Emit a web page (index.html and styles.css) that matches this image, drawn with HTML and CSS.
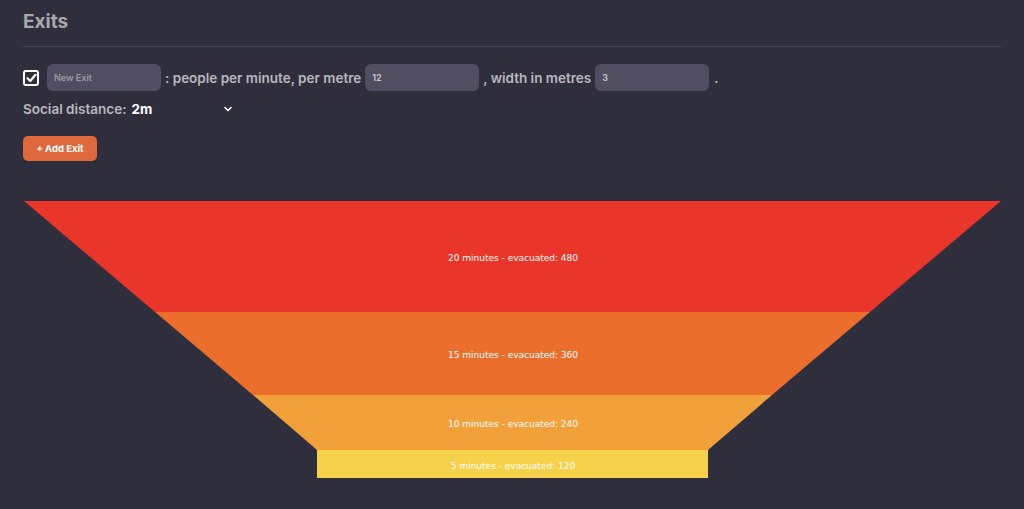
FILE: index.html
```html
<!DOCTYPE html>
<html>
<head>
<meta charset="utf-8">
<link rel="stylesheet" href="styles.css">
</head>
<body>
<div class="page">
  <h2 class="title">Exits</h2>
  <div class="rule"></div>
  <div class="exit-row">
    <span class="check">
      <svg width="11" height="10" viewBox="0 0 11 10"><path d="M1.5 5.2 L4.2 8 L9.5 1.8" fill="none" stroke="#fff" stroke-width="2.2" stroke-linecap="round" stroke-linejoin="round"/></svg>
    </span>
    <span class="field w-name">New Exit</span>
    <span class="lbl">: people per minute, per metre</span>
    <span class="field w-num">12</span>
    <span class="lbl">, width in metres</span>
    <span class="field w-num">3</span>
    <span class="lbl">.</span>
  </div>
  <div class="dist-row">
    <span class="lbl">Social distance:</span>
    <span class="select">
      <span class="sel-val">2m</span>
      <svg class="chev" width="8" height="6" viewBox="0 0 8 6"><path d="M1 1.5 L4 4.5 L7 1.5" fill="none" stroke="#fff" stroke-width="1.6" stroke-linecap="round" stroke-linejoin="round"/></svg>
    </span>
  </div>
  <button class="add">+ Add Exit</button>
  <svg class="funnel" width="978" height="278" viewBox="0 0 978 278">
    <polygon points="0,0 977,0 846,111 131,111" fill="#e9352a"/>
    <polygon points="131,111 846,111 748,194 229,194" fill="#ec6e2d"/>
    <polygon points="229,194 748,194 684,249 293,249" fill="#f2a03a"/>
    <rect x="293" y="249" width="391" height="28" fill="#f5d249"/>
    <g class="ftext" fill="#fff" text-anchor="middle">
      <text x="489" y="60">20 minutes - evacuated: 480</text>
      <text x="489" y="157">15 minutes - evacuated: 360</text>
      <text x="489" y="226">10 minutes - evacuated: 240</text>
      <text x="489" y="268">5 minutes - evacuated: 120</text>
    </g>
  </svg>
</div>
</body>
</html>
```
FILE: styles.css
```css
html, body { margin: 0; padding: 0; }
body {
  background: #2f2e3d;
  font-family: "Inter", "Noto Sans", sans-serif;
  width: 1024px;
  height: 509px;
  overflow: hidden;
}
.page { padding: 9px 23px 0 23px; }
.title {
  margin: 0;
  font-size: 19px;
  font-weight: 700;
  color: #a9a8ab;
  line-height: 26px;
}
.rule {
  height: 1px;
  background: #45444f;
  margin-top: 11px;
  width: 978px;
}
.exit-row {
  display: flex;
  align-items: center;
  margin-top: 17px;
  height: 27px;
}
.check {
  width: 12px;
  height: 12px;
  border: 2px solid #fff;
  border-radius: 3px;
  display: flex;
  align-items: center;
  justify-content: center;
  margin-right: 8px;
}
.field {
  height: 27px;
  background: #514e61;
  border-radius: 6px;
  font-size: 9px;
  font-weight: 600;
  color: #b3b1bc;
  display: flex;
  align-items: center;
  padding-left: 7px;
  box-sizing: border-box;
}
.w-name { width: 114px; color: #9c99a6; }
.w-num { width: 114px; color: #c8c6cf; }
.lbl {
  font-size: 13.5px;
  font-weight: 600;
  color: #b9b8be;
  margin: 0 4px 0 4px;
  white-space: nowrap;
}
.exit-row .lbl:last-child { margin-left: 5px; }
.dist-row {
  display: flex;
  align-items: center;
  margin-top: 6px;
  height: 24px;
}
.dist-row .lbl { margin-left: 0; }
.select {
  display: flex;
  align-items: center;
  width: 101px;
  justify-content: space-between;
  margin-left: 1px;
}
.sel-val {
  font-size: 13.5px;
  font-weight: 700;
  color: #fff;
}
.add {
  display: block;
  margin-top: 15px;
  width: 74px;
  height: 25px;
  border: none;
  border-radius: 5px;
  background: #e0683d;
  color: #fff;
  font-family: "Inter", "Noto Sans", sans-serif;
  font-size: 9.5px;
  font-weight: 700;
  padding: 0;
}
.funnel { display: block; margin-top: 40px; margin-left: 1px; }
.ftext text {
  font-family: "DejaVu Sans", Verdana, sans-serif;
  font-size: 9px;
}
```
